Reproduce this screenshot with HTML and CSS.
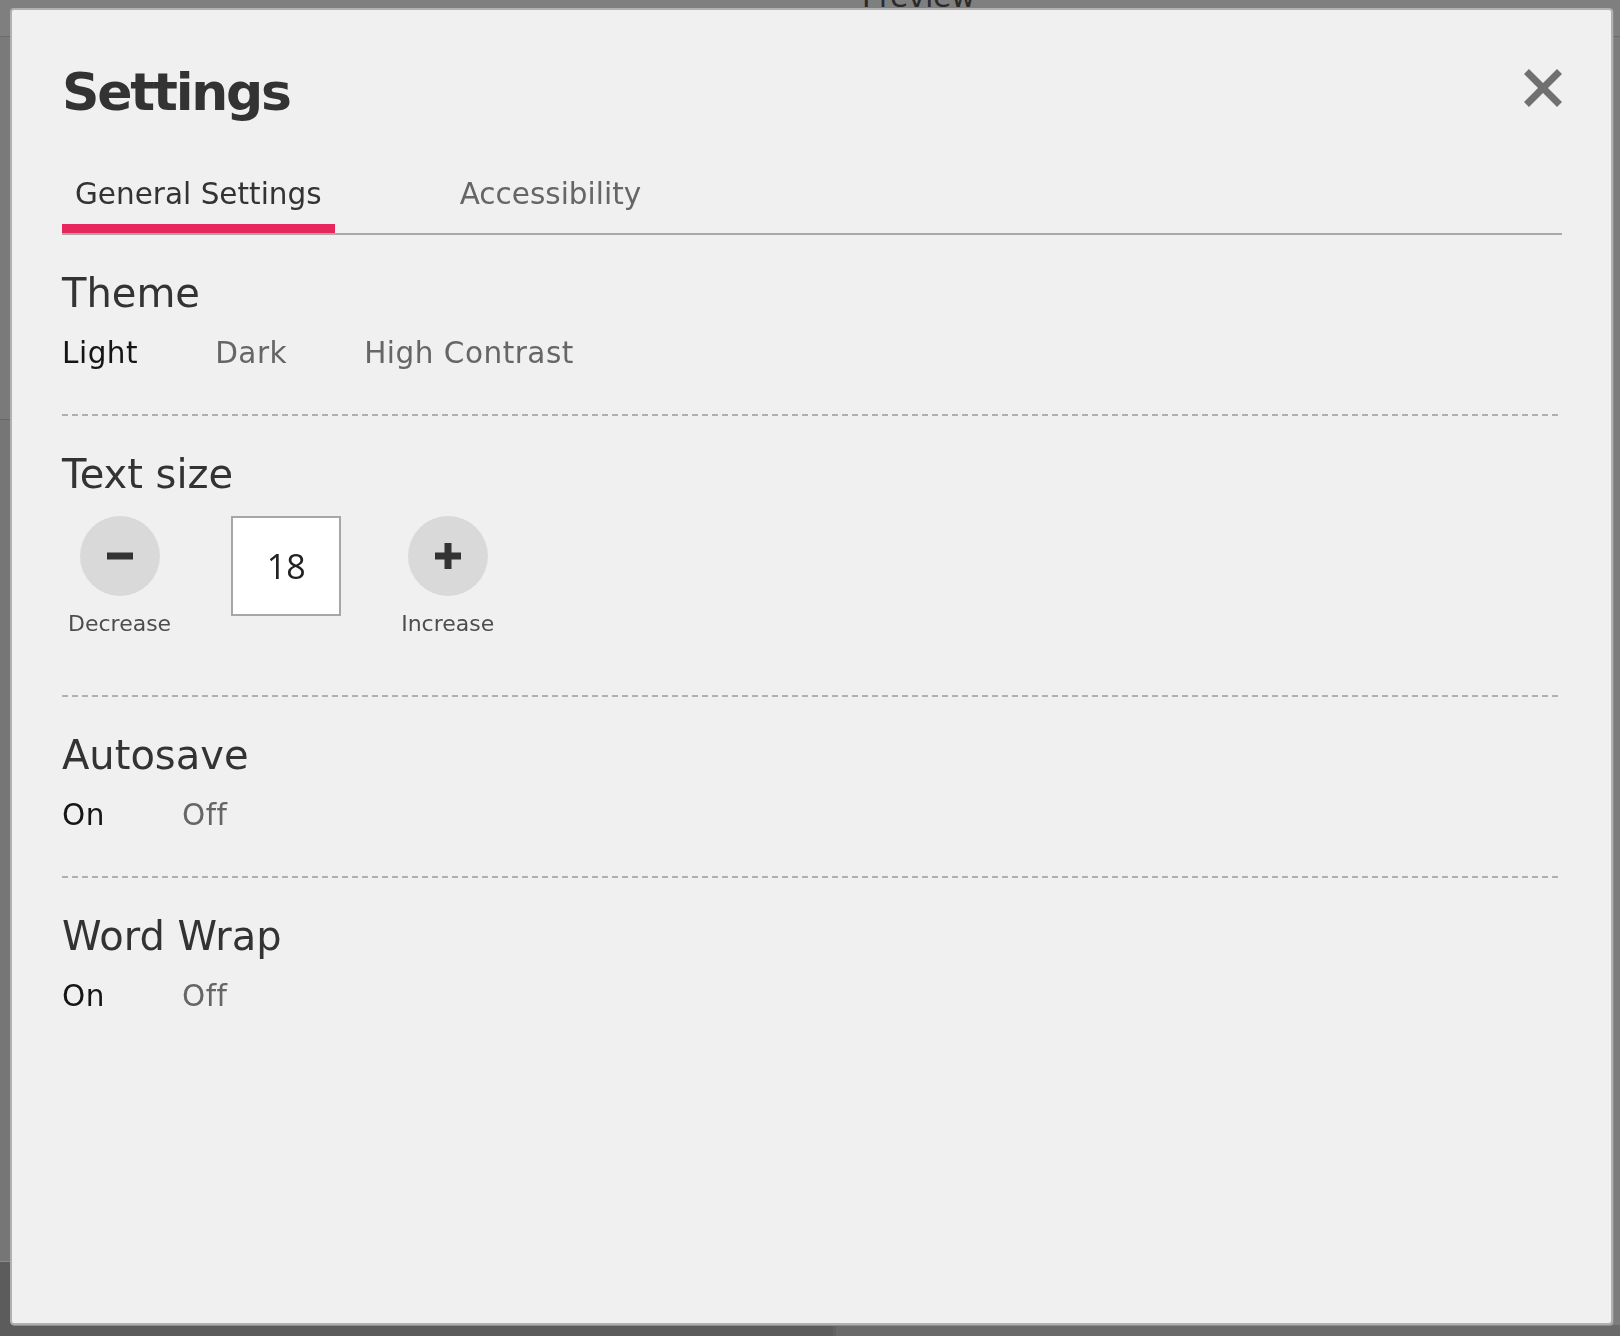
FILE: index.html
```html
<!DOCTYPE html>
<html lang="en">
<head>
<meta charset="utf-8">
<title>Settings</title>
<link rel="stylesheet" href="styles.css">
</head>
<body>
<div class="app">
  <header class="app-top"><span class="preview-title">Preview</span></header>
  <div class="app-main">
    <div class="pane-left">
      <div class="pane-block pane-block-a"></div>
      <div class="pane-block pane-block-b"></div>
      <div class="pane-footer"></div>
    </div>
    <div class="pane-split"></div>
    <div class="pane-right">
      <div class="pane-right-body"></div>
      <div class="pane-right-footer"></div>
    </div>
  </div>
</div>

<div class="modal" role="dialog" aria-label="Settings">
  <div class="modal-head">
    <h1 class="modal-title">Settings</h1>
    <button class="close-btn" aria-label="Close">
      <svg width="38" height="38" viewBox="0 0 38 38" aria-hidden="true">
        <path d="M2.5 2.5 L35.5 35.5 M35.5 2.5 L2.5 35.5" stroke="#707070" stroke-width="7" fill="none"/>
      </svg>
    </button>
  </div>

  <nav class="tabs">
    <span class="tab tab-active">General Settings</span>
    <span class="tab">Accessibility</span>
  </nav>

  <section class="section">
    <h2 class="section-title">Theme</h2>
    <div class="options">
      <span class="option option-on">Light</span>
      <span class="option">Dark</span>
      <span class="option">High Contrast</span>
    </div>
  </section>
  <div class="divider"></div>

  <section class="section">
    <h2 class="section-title">Text size</h2>
    <div class="stepper">
      <div class="step step-dec">
        <span class="step-btn">
          <svg width="28" height="28" viewBox="0 0 28 28" aria-hidden="true"><rect x="1" y="10.5" width="26" height="7" fill="#333"/></svg>
        </span>
        <span class="step-label">Decrease</span>
      </div>
      <div class="value-box">18</div>
      <div class="step step-inc">
        <span class="step-btn">
          <svg width="28" height="28" viewBox="0 0 28 28" aria-hidden="true"><rect x="1" y="10.5" width="26" height="7" fill="#333"/><rect x="10.5" y="1" width="7" height="26" fill="#333"/></svg>
        </span>
        <span class="step-label">Increase</span>
      </div>
    </div>
  </section>
  <div class="divider"></div>

  <section class="section">
    <h2 class="section-title">Autosave</h2>
    <div class="options">
      <span class="option option-on">On</span>
      <span class="option">Off</span>
    </div>
  </section>
  <div class="divider"></div>

  <section class="section">
    <h2 class="section-title">Word Wrap</h2>
    <div class="options">
      <span class="option option-on">On</span>
      <span class="option">Off</span>
    </div>
  </section>
</div>
</body>
</html>
```

FILE: styles.css
```css
* { box-sizing: border-box; }

html, body {
  margin: 0;
  padding: 0;
}

body {
  width: 1620px;
  height: 1336px;
  overflow: hidden;
  background: #7c7c7c;
  font-family: "DejaVu Sans", "Noto Sans", sans-serif;
  color: #333;
}

/* dimmed application behind the dialog */
.app {
  height: 1336px;
  display: flex;
  flex-direction: column;
}

.app-top {
  height: 37px;
  flex: none;
  background: #7f7f7f;
  border-bottom: 1px solid #6a6a6a;
  padding-left: 862px;
  overflow: hidden;
}

.preview-title {
  display: block;
  margin-top: -20px;
  font-size: 29px;
  line-height: 34px;
  color: #2a2a2a;
}

.app-main {
  flex: 1;
  display: grid;
  grid-template-columns: 833px 3px 1fr;
}

.pane-left {
  display: flex;
  flex-direction: column;
}

.pane-block-a {
  height: 383px;
  background: #7a7a7a;
  border-bottom: 1px solid #666;
}

.pane-block-b {
  height: 842px;
  background: #767676;
  border-bottom: 1px solid #8a8a8a;
}

.pane-footer {
  flex: 1;
  background: #5c5c5c;
}

.pane-split {
  background: #626262;
}

.pane-right {
  display: flex;
  flex-direction: column;
}

.pane-right-body {
  flex: 1;
  background: #7c7c7c;
}

.pane-right-footer {
  height: 11px;
  background: #6a6a6a;
}

/* dialog */
.modal {
  position: fixed;
  left: 10px;
  top: 8px;
  width: 1603px;
  height: 1317px;
  background: #f0f0f0;
  border: 2px solid #b1b1b1;
  border-radius: 4px;
  box-shadow: 1px 1px 0 #8c8c8c;
  padding: 51px 49px 0 50px;
}

.modal-head {
  display: flex;
  justify-content: space-between;
  align-items: flex-start;
}

.modal-title {
  margin: 0;
  font-size: 52px;
  line-height: 62px;
  font-weight: 700;
  letter-spacing: -2.2px;
  color: #333;
}

.close-btn {
  margin-top: 8px;
  width: 38px;
  height: 38px;
  padding: 0;
  border: 0;
  background: none;
  display: block;
}

.close-btn svg { display: block; }

.tabs {
  display: flex;
  gap: 112px;
  margin-top: 53px;
  border-bottom: 2px solid #a9a9a9;
}

.tab {
  font-size: 29.5px;
  line-height: 36px;
  padding: 0 13px 12px;
  color: #666;
  border-bottom: 9px solid transparent;
}

.tab-active {
  color: #333;
  border-bottom-color: #e8265e;
}

.section {
  padding: 34px 0 43px;
}

.section-title {
  margin: 0;
  font-size: 40px;
  line-height: 48px;
  font-weight: 400;
  color: #333;
}

.options {
  display: flex;
  gap: 77px;
  margin-top: 18px;
  font-size: 29.5px;
  line-height: 36px;
  letter-spacing: 0.5px;
  color: #666;
}

.option-on {
  color: #151515;
}

.divider {
  height: 2px;
  background: repeating-linear-gradient(90deg, #b0b0b0 0 6px, transparent 6px 10px);
}

.stepper {
  display: flex;
  align-items: flex-start;
  margin-top: 18px;
  margin-bottom: 14px;
}

.step {
  display: flex;
  flex-direction: column;
  align-items: center;
}

.step-dec { margin-left: 6px; }
.step-inc { margin-left: 60px; }

.step-btn {
  width: 80px;
  height: 80px;
  border-radius: 50%;
  background: #d9d9d9;
  display: flex;
  align-items: center;
  justify-content: center;
}

.step-btn svg { display: block; }

.step-label {
  margin-top: 14px;
  font-size: 22px;
  line-height: 28px;
  color: #4d4d4d;
}

.value-box {
  margin-left: 60px;
  width: 110px;
  height: 100px;
  border: 2px solid #a6a6a6;
  background: #fff;
  display: flex;
  align-items: center;
  justify-content: center;
  font-family: "Open Sans", "Noto Sans", sans-serif;
  font-size: 34px;
  color: #222;
}
```
